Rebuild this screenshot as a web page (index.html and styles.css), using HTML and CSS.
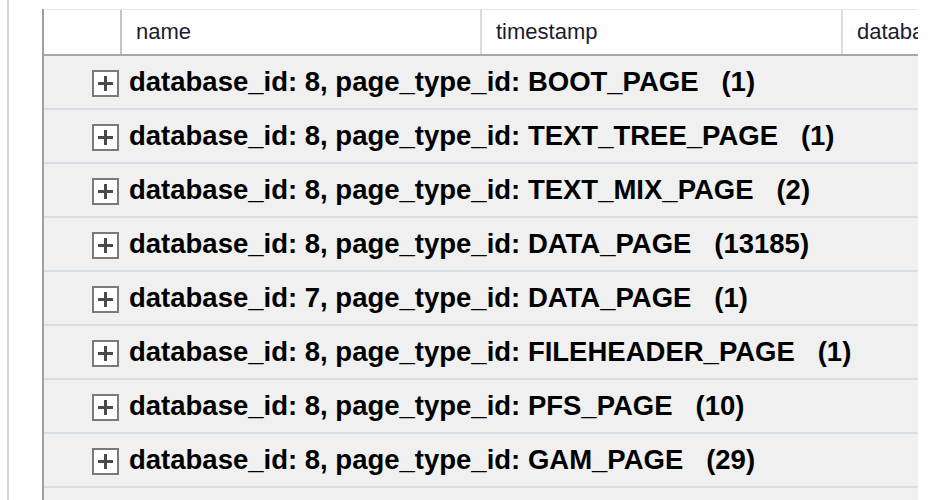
FILE: index.html
```html
<!DOCTYPE html>
<html>
<head>
<meta charset="utf-8">
<link rel="stylesheet" href="styles.css">
</head>
<body>
<div class="pane">
  <div class="grid">
    <div class="header">
      <div class="hcell rowhead"></div>
      <div class="hcell col-name">name</div>
      <div class="hcell col-ts">timestamp</div>
      <div class="hcell col-db">database_id</div>
    </div>
    <div class="group"><span class="plus"></span><span class="label">database_id: 8, page_type_id: BOOT_PAGE&nbsp;&nbsp; (1)</span></div>
    <div class="group"><span class="plus"></span><span class="label">database_id: 8, page_type_id: TEXT_TREE_PAGE&nbsp;&nbsp; (1)</span></div>
    <div class="group"><span class="plus"></span><span class="label">database_id: 8, page_type_id: TEXT_MIX_PAGE&nbsp;&nbsp; (2)</span></div>
    <div class="group"><span class="plus"></span><span class="label">database_id: 8, page_type_id: DATA_PAGE&nbsp;&nbsp; (13185)</span></div>
    <div class="group"><span class="plus"></span><span class="label">database_id: 7, page_type_id: DATA_PAGE&nbsp;&nbsp; (1)</span></div>
    <div class="group"><span class="plus"></span><span class="label">database_id: 8, page_type_id: FILEHEADER_PAGE&nbsp;&nbsp; (1)</span></div>
    <div class="group"><span class="plus"></span><span class="label">database_id: 8, page_type_id: PFS_PAGE&nbsp;&nbsp; (10)</span></div>
    <div class="group"><span class="plus"></span><span class="label">database_id: 8, page_type_id: GAM_PAGE&nbsp;&nbsp; (29)</span></div>
    <div class="group empty"></div>
  </div>
</div>
</body>
</html>
```

FILE: styles.css
```css
html, body {
  margin: 0;
  padding: 0;
  background: #ffffff;
  overflow: hidden;
  height: 500px;
}

.pane {
  margin-left: 7px;
  border-left: 2px solid #d6d6d6;
  height: 500px;
  padding-top: 9px;
  padding-left: 33px;
  box-sizing: border-box;
  overflow: hidden;
}

.grid {
  width: 874px;
  height: 491px;
  border-left: 2px solid #a0a0a0;
  background: #f0f0f0;
  font-family: "Liberation Sans", Arial, sans-serif;
  overflow: hidden;
}

.header {
  display: flex;
  height: 44px;
  background: #ffffff;
  border-top: 1px solid #e6e6e6;
  border-bottom: 2px solid #a8a8a8;
  box-sizing: content-box;
}

.hcell {
  box-sizing: border-box;
  height: 44px;
  font-size: 22px;
  color: #1b1b2f;
  line-height: 44px;
  padding-left: 14px;
  border-right: 2px solid #dcdcdc;
  white-space: nowrap;
  overflow: hidden;
}

.rowhead { width: 78px; border-right-color: #c4c4c4; }
.col-name { width: 360px; }
.col-ts { width: 361px; }
.col-db { flex: 1; border-right: none; }

.group {
  display: flex;
  align-items: center;
  height: 52px;
  border-bottom: 2px solid #d8dde7;
  padding-left: 48px;
  white-space: nowrap;
}

.plus {
  position: relative;
  width: 27px;
  height: 27px;
  box-sizing: border-box;
  border: 2px solid #7a7a7a;
  background: #ffffff;
  flex: none;
  margin-top: 3px;
}

.plus::before,
.plus::after {
  content: "";
  position: absolute;
  background: #4a4a4a;
}

.plus::before {
  left: 4px;
  right: 4px;
  top: 10px;
  height: 3px;
}

.plus::after {
  top: 4px;
  bottom: 4px;
  left: 10px;
  width: 3px;
}

.label {
  margin-left: 10px;
  font-size: 27.5px;
  font-weight: bold;
  color: #000000;
}
```
